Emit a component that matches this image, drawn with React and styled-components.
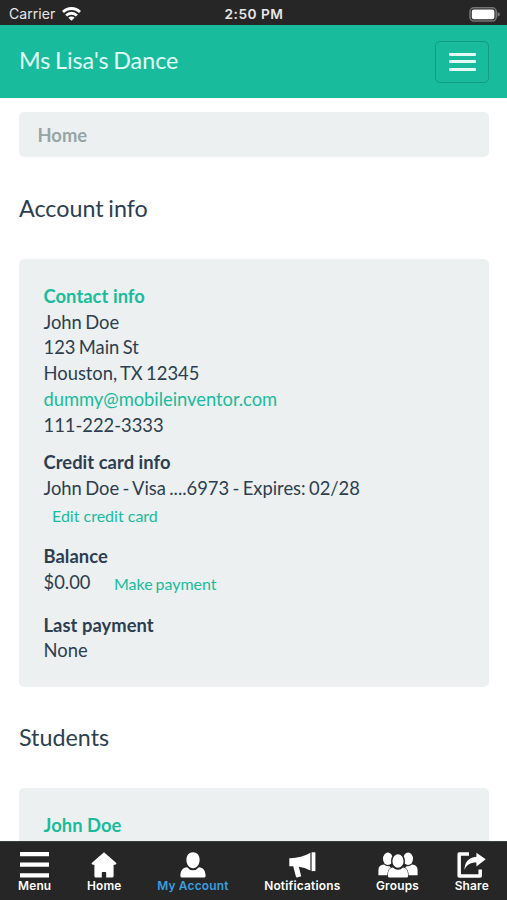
import React from "react";
import styled, { createGlobalStyle } from "styled-components";

const GlobalStyle = createGlobalStyle`
  * {
    box-sizing: border-box;
  }
  body {
    margin: 0;
    background: #fff;
    overflow: hidden;
  }
`;

const Screen = styled.div`
  display: flex;
  flex-direction: column;
  height: 900px;
  overflow: hidden;
  color: #2c3e50;
  font-family: Lato, sans-serif;
  font-size: 18.37px;
  line-height: 25.7px;
  word-spacing: -1.35px;
`;
const StatusBar = styled.div`
  flex: none;
  display: grid;
  grid-template-columns: 1fr auto 1fr;
  align-items: center;
  height: 25px;
  padding: 2px 7px 0 9px;
  background: #262626;
  color: #e6e6e6;
  font-family: Inter, sans-serif;
  font-size: 14px;
  line-height: 24px;
  word-spacing: 0;
`;
const Carrier = styled.div`
  display: flex;
  align-items: center;
  gap: 6.5px;
  letter-spacing: 0.05px;
`;
const Time = styled.div`
  font-size: 13.7px;
  font-weight: 600;
  letter-spacing: 0.5px;
  padding-right: 1px;
`;
const BatteryIcon = styled.svg`
  justify-self: end;
`;
const NavBar = styled.header`
  flex: none;
  display: flex;
  align-items: center;
  justify-content: space-between;
  height: 73px;
  padding: 0 18px 0 19px;
  background: #18bc9c;
`;
const Brand = styled.div`
  color: #e2fbf5;
  font-size: 23.3px;
  line-height: 28px;
  padding-bottom: 3px;
`;
const Toggle = styled.button`
  display: flex;
  flex-direction: column;
  align-items: center;
  justify-content: center;
  gap: 4.5px;
  width: 54px;
  height: 42px;
  padding: 0;
  border: 1px solid #149c82;
  border-radius: 5px;
  background: transparent;
`;
const ToggleBar = styled.span`
  width: 27px;
  height: 3px;
  border-radius: 1px;
  background: #e2fbf5;
`;
const Content = styled.main`
  flex: 1;
  min-height: 0;
  overflow: hidden;
  padding: 14px 18px 0 19px;
`;
const Breadcrumb = styled.div`
  height: 45px;
  padding: 10.5px 18.5px;
  border-radius: 5px;
  background: #ecf0f1;
  color: #95a5a6;
  font-weight: bold;
`;
const Title = styled.h4`
  margin: ${(props) => props.top} 0 38px;
  font-size: 23.3px;
  font-weight: normal;
  line-height: 26px;
`;
const Card = styled.section`
  padding: 25px 24.5px 23px;
  border-radius: 5px;
  background: #ecf0f1;
`;
const Block = styled.div`
  margin-bottom: 12.2px;
  &:last-child {
    margin-bottom: 0;
  }
`;
const Line = styled.div`
  white-space: nowrap;
`;
const Label = styled.div`
  color: ${(props) => (props.link ? "#18bc9c" : "inherit")};
  font-weight: bold;
  letter-spacing: 0.05px;
  word-spacing: 0;
`;
const Link = styled.a`
  color: #18bc9c;
  letter-spacing: -0.03px;
`;
const ActionRow = styled.div`
  display: flex;
  height: ${(props) => props.height};
`;
const Action = styled.a`
  margin-left: ${(props) => props.indent};
  padding-top: ${(props) => props.drop};
  color: #18bc9c;
  font-size: 16px;
  word-spacing: ${(props) => props.spacing};
`;
const TabBar = styled.nav`
  flex: none;
  display: flex;
  justify-content: space-between;
  height: 59px;
  padding: 10px 18px 0;
  border-top: 1px solid #39403c;
  background: #262626;
`;
const Tab = styled.a`
  display: flex;
  flex-direction: column;
  align-items: center;
  color: ${(props) => (props.active ? "#3b9fe0" : "#fff")};
  font-family: Inter, sans-serif;
  font-size: 11.9px;
  font-weight: 600;
  letter-spacing: 0.2px;
  line-height: 16px;
  word-spacing: 0;
  svg {
    display: block;
    height: 26px;
    fill: #fff;
  }
`;

const MenuIcon = () => (
  <svg width="29" height="26" viewBox="0 0 29 26">
    <path d="M0 0h29v4.2H0zM0 10.5h29v4.2H0zM0 21.3h29v4.2H0z" />
  </svg>
);
const HomeIcon = () => (
  <svg width="26" height="26" viewBox="0 0 26 26">
    <path d="M13 .3 25.6 11.2 24.4 12.8H22.6V24Q22.6 25.5 21 25.5H15.2V21Q15.2 20 14.2 20H11.8Q10.8 20 10.8 21V25.5H4.9Q3.4 25.5 3.4 24V12.8H1.6L.4 11.2Z" />
  </svg>
);
const UserIcon = () => (
  <svg width="26" height="26" viewBox="0 0 26 26">
    <path d="M13 .3C17 .3 19.6 3.3 19.6 7.8C19.6 12.5 16.9 16.2 13 16.2S6.4 12.5 6.4 7.8C6.4 3.3 9 .3 13 .3Z" />
    <path d="M7.1 15.2Q9.4 18.2 13 18.2T18.9 15.2C23.3 15.6 25.6 18.5 25.6 24.1Q25.6 25.6 24 25.6H2Q.4 25.6 .4 24.1C.4 18.5 2.7 15.6 7.1 15.2Z" />
  </svg>
);
const MegaphoneIcon = () => (
  <svg width="27" height="26" viewBox="0 0 27 26">
    <path d="M.3 6.2Q12 6.4 21.4.8V18.4Q15.5 15.2 9.8 14.7L12.2 24.2 8.2 25.4Q7.2 25.5 6.9 24.5L4.2 14.3H.3Z" />
    <path d="M22.6 .3h3.8v18.8H22.6z" />
  </svg>
);
const GroupsIcon = () => (
  <svg width="40" height="26" viewBox="0 0 40 26">
    <ellipse cx="9.9" cy="6.8" rx="4.9" ry="6.2" />
    <ellipse cx="30.1" cy="6.8" rx="4.9" ry="6.2" />
    <path d="M.4 23.2V18Q.6 13 6 12.6Q8 14.7 11.4 14.3L12.8 15.5Q9.6 17.3 9.4 23.2Z" />
    <path d="M39.6 23.2V18Q39.4 13 34 12.6Q32 14.7 28.6 14.3L27.2 15.5Q30.4 17.3 30.6 23.2Z" />
    <ellipse cx="20" cy="9" rx="6.3" ry="7.5" stroke="#262626" strokeWidth="1.4" />
    <path d="M15 15.4Q17 17.7 20 17.7T25 15.4C28.6 15.8 30 18.2 30 23V24.2Q30 25.5 28.7 25.5H11.3Q10 25.5 10 24.2V23C10 18.2 11.4 15.8 15 15.4Z" />
  </svg>
);
const ShareIcon = () => (
  <svg width="29" height="26" viewBox="0 0 29 26">
    <path d="M12 2H2.2V24.1H23.2V17.5" fill="none" stroke="#fff" strokeWidth="3.5" strokeLinejoin="round" />
    <path d="M19.4.7 28.7 7.3 19.4 14.6V10.6C13.5 10.5 9.7 12.7 7.5 17.8C7.5 10.3 11.6 5.3 19.4 4.7Z" />
  </svg>
);

const tabs = [
  { name: "Menu", icon: MenuIcon },
  { name: "Home", icon: HomeIcon },
  { name: "My Account", icon: UserIcon, active: true },
  { name: "Notifications", icon: MegaphoneIcon },
  { name: "Groups", icon: GroupsIcon },
  { name: "Share", icon: ShareIcon },
];

const App = () => {
  return (
    <>
      <GlobalStyle />
      <Screen>
        <StatusBar>
          <Carrier>
            Carrier
            <svg width="19" height="14" viewBox="0 0 19 14" fill="none" stroke="#fff" strokeWidth="2.8">
              <path d="M1 5.1C5.8.3 13.2.3 18 5.1M4.1 8.5C7.2 5.5 11.8 5.5 14.9 8.5" />
              <path d="M9.5 13.8 6.4 10.7C8.2 9 10.8 9 12.6 10.7Z" fill="#fff" stroke="none" />
            </svg>
          </Carrier>
          <Time>2:50 PM</Time>
          <BatteryIcon width="31" height="15" viewBox="0 0 31 15">
            <rect x="1" y=".8" width="26.2" height="13.2" rx="4" fill="none" stroke="#747474" strokeWidth="1.6" />
            <rect x="2.8" y="2.6" width="22.6" height="9.6" rx="2" fill="#fff" />
            <path d="M28.5 5Q31 6 31 7.4T28.5 9.8Z" fill="#747474" />
          </BatteryIcon>
        </StatusBar>
        <NavBar>
          <Brand>Ms Lisa's Dance</Brand>
          <Toggle aria-label="Toggle navigation">
            <ToggleBar />
            <ToggleBar />
            <ToggleBar />
          </Toggle>
        </NavBar>
        <Content>
          <Breadcrumb>Home</Breadcrumb>
          <Title top="38px">Account info</Title>
          <Card>
            <Block>
              <Label link>Contact info</Label>
              <Line>John Doe</Line>
              <Line>123 Main St</Line>
              <Line>Houston, TX 12345</Line>
              <Line>
                <Link>dummy@mobileinventor.com</Link>
              </Line>
              <Line>111-222-3333</Line>
            </Block>
            <Block>
              <Label>Credit card info</Label>
              <Line>John Doe - Visa ....6973 - Expires: 02/28</Line>
              <ActionRow height="30.2px">
                <Action indent="8.5px" drop="1px" spacing="0">
                  Edit credit card
                </Action>
              </ActionRow>
            </Block>
            <Block>
              <Label>Balance</Label>
              <ActionRow height="30.7px">
                <span>$0.00</span>
                <Action indent="23.5px" drop="1.2px" spacing="-1.3px">
                  Make payment
                </Action>
              </ActionRow>
            </Block>
            <Block>
              <Label>Last payment</Label>
              <Line>None</Line>
            </Block>
          </Card>
          <Title top="37px">Students</Title>
          <Card>
            <Label link>John Doe</Label>
          </Card>
        </Content>
        <TabBar>
          {tabs.map(({ name, icon: Icon, active }) => (
            <Tab key={name} active={active ? 1 : undefined}>
              <Icon />
              {name}
            </Tab>
          ))}
        </TabBar>
      </Screen>
    </>
  );
};
export default App;
